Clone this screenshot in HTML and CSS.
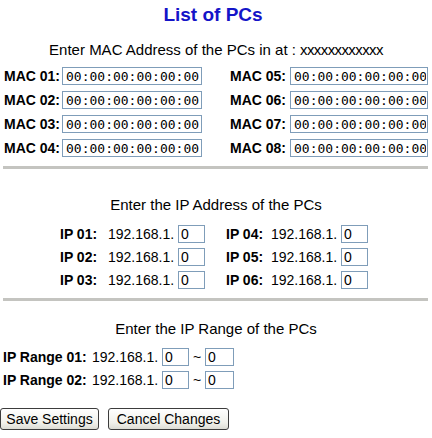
FILE: index.html
```html
<!DOCTYPE html>
<html>
<head>
<meta charset="utf-8">
<title>List of PCs</title>
<link rel="stylesheet" href="styles.css">
</head>
<body>
<div class="page">
  <h1 class="title">List of PCs</h1>
  <p class="heading sub">Enter MAC Address of the PCs in at : <span class="xs">xxxxxxxxxxxx</span></p>

  <div class="mac-grid">
    <label class="lbl">MAC 01:</label><input class="mac" value="00:00:00:00:00:00"><span></span>
    <label class="lbl">MAC 05:</label><input class="mac" value="00:00:00:00:00:00">
    <label class="lbl">MAC 02:</label><input class="mac" value="00:00:00:00:00:00"><span></span>
    <label class="lbl">MAC 06:</label><input class="mac" value="00:00:00:00:00:00">
    <label class="lbl">MAC 03:</label><input class="mac" value="00:00:00:00:00:00"><span></span>
    <label class="lbl">MAC 07:</label><input class="mac" value="00:00:00:00:00:00">
    <label class="lbl">MAC 04:</label><input class="mac" value="00:00:00:00:00:00"><span></span>
    <label class="lbl">MAC 08:</label><input class="mac" value="00:00:00:00:00:00">
  </div>

  <div class="rule"></div>

  <p class="heading ip-head">Enter the IP Address of the PCs</p>
  <div class="ip-grid">
    <label class="lbl">IP 01:</label><span class="pre">192.168.1.</span><input class="num" value="0">
    <label class="lbl right">IP 04:</label><span class="pre">192.168.1.</span><input class="num" value="0">
    <label class="lbl">IP 02:</label><span class="pre">192.168.1.</span><input class="num" value="0">
    <label class="lbl right">IP 05:</label><span class="pre">192.168.1.</span><input class="num" value="0">
    <label class="lbl">IP 03:</label><span class="pre">192.168.1.</span><input class="num" value="0">
    <label class="lbl right">IP 06:</label><span class="pre">192.168.1.</span><input class="num" value="0">
  </div>

  <div class="rule rule2"></div>

  <p class="heading range-head">Enter the IP Range of the PCs</p>
  <div class="range-grid">
    <label class="lbl">IP Range 01:</label><span class="pre">192.168.1.</span><input class="num" value="0"><span class="tilde">~</span><input class="num" value="0">
    <label class="lbl">IP Range 02:</label><span class="pre">192.168.1.</span><input class="num" value="0"><span class="tilde">~</span><input class="num" value="0">
  </div>

  <div class="buttons">
    <button class="btn save">Save Settings</button>
    <button class="btn cancel">Cancel Changes</button>
  </div>
</div>
</body>
</html>
```
FILE: styles.css
```css
html, body {
  margin: 0;
  padding: 0;
  background: #ffffff;
}

body {
  font-family: "Liberation Sans", Arial, sans-serif;
  color: #000000;
}

.page {
  width: 432px;
}

.title {
  margin: 4px 6px 0 0;
  font-size: 19px;
  line-height: 22px;
  font-weight: bold;
  color: #1414c8;
  text-align: center;
}

.heading {
  margin: 0;
  font-size: 15px;
  line-height: 18px;
  text-align: center;
}

.sub {
  margin-top: 15px;
}

.xs {
  letter-spacing: -0.6px;
}

.lbl {
  font-size: 14px;
  font-weight: bold;
  line-height: 18px;
  white-space: nowrap;
}

.pre {
  font-size: 14px;
  line-height: 18px;
  white-space: nowrap;
}

input {
  box-sizing: border-box;
  height: 18px;
  margin: 0;
  padding: 0 2px;
  border: 1px solid #7f9db9;
  background: #ffffff;
  color: #000000;
  outline: none;
}

.mac-grid {
  display: grid;
  grid-template-columns: 58px 140px 28px 60px 138px;
  grid-auto-rows: 18px;
  row-gap: 6px;
  margin-top: 8px;
  padding-left: 4px;
  align-items: center;
}

.mac {
  width: 100%;
  font-family: "DejaVu Sans Mono", "Liberation Mono", monospace;
  font-size: 13px;
  padding: 0 1px 0 3px;
}

.rule {
  height: 3px;
  margin: 9px 4px 0 3px;
  background: #c4c4c0;
}

.ip-head {
  margin-top: 27px;
}

.ip-grid {
  display: grid;
  grid-template-columns: 48px 70px 27px 66px 70px 27px;
  grid-auto-rows: 18px;
  row-gap: 5px;
  margin-top: 11px;
  padding-left: 60px;
  align-items: center;
}

.ip-grid .right {
  padding-left: 21px;
}

.num {
  width: 100%;
  font-family: "Liberation Sans", Arial, sans-serif;
  font-size: 14px;
}

.rule2 {
  margin-top: 9px;
}

.range-head {
  margin-top: 19px;
}

.range-grid {
  display: grid;
  grid-template-columns: 89px 70px 27px 16px 29px;
  grid-auto-rows: 18px;
  row-gap: 5px;
  margin-top: 10px;
  padding-left: 3px;
  align-items: center;
}

.tilde {
  font-size: 14px;
  line-height: 18px;
  text-align: center;
}

.buttons {
  display: flex;
  gap: 9px;
  margin-top: 19px;
}

.btn {
  box-sizing: border-box;
  height: 22px;
  padding: 0;
  border: 1px solid #3c3c3c;
  border-radius: 3px;
  background: linear-gradient(#ffffff, #f0f0ea 70%, #dcdcd4);
  font-family: "Liberation Sans", Arial, sans-serif;
  font-size: 14px;
  color: #000000;
}

.save {
  width: 99px;
}

.cancel {
  width: 121px;
}
```
